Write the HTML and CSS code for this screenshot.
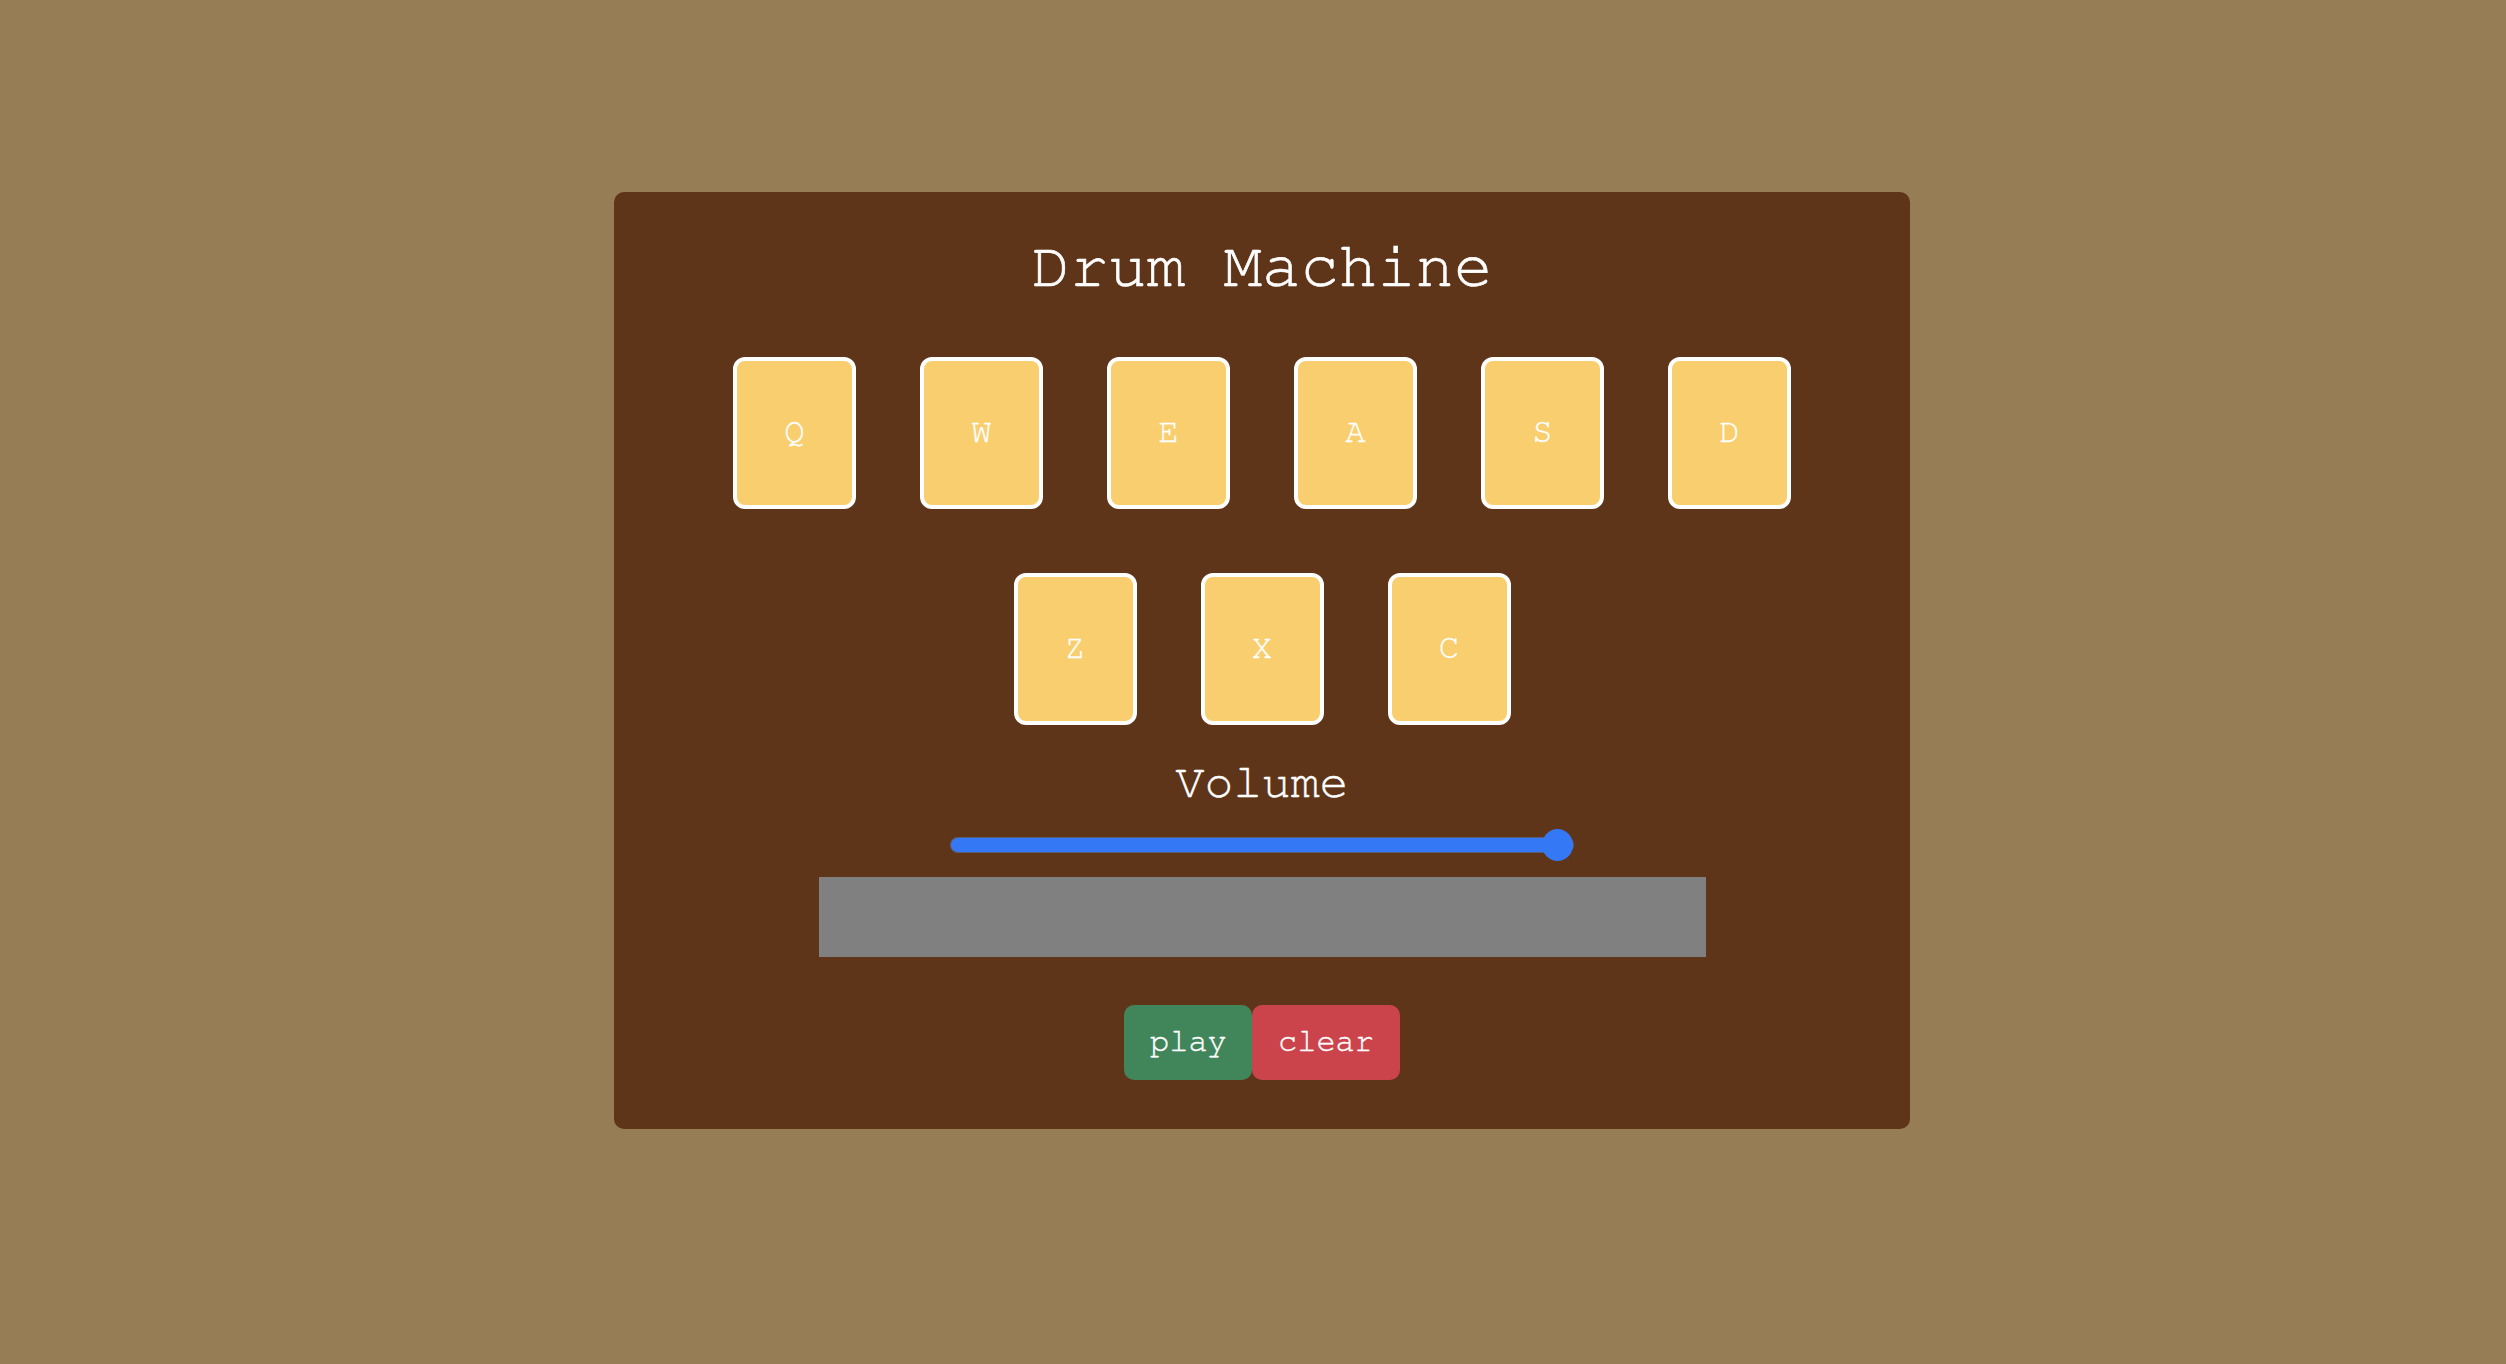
FILE: index.html
```html
<!DOCTYPE html>
<html lang="en">
<head>
<meta charset="utf-8">
<title>Drum Machine</title>
<link rel="stylesheet" href="styles.css">
</head>
<body>
<div class="stage">
  <main class="machine">
    <h1 class="title">Drum Machine</h1>
    <div class="pads">
      <div class="pad">Q</div>
      <div class="pad">W</div>
      <div class="pad">E</div>
      <div class="pad">A</div>
      <div class="pad">S</div>
      <div class="pad">D</div>
      <div class="pad">Z</div>
      <div class="pad">X</div>
      <div class="pad">C</div>
    </div>
    <div class="volume-label">Volume</div>
    <input class="volume" type="range" min="0" max="1" step="0.01" value="1">
    <div class="display"></div>
    <div class="controls">
      <button class="btn btn-play">play</button>
      <button class="btn btn-clear">clear</button>
    </div>
  </main>
</div>
</body>
</html>
```
FILE: styles.css
```css
html, body {
  margin: 0;
  padding: 0;
}
body {
  background: #967d55;
  font-family: "Nimbus Mono PS", "Nimbus Mono L", "FreeMono", Courier, "Courier New", "Liberation Mono", monospace;
  color: #ffffff;
  min-height: 100vh;
}
.stage {
  display: flex;
  justify-content: center;
  padding: 192px 0 0 18px;
}
.machine {
  width: 1296px;
  box-sizing: border-box;
  background: #5e3519;
  border-radius: 10px;
  padding: 39px 0 49px;
  display: flex;
  flex-direction: column;
  align-items: center;
}
.title {
  margin: 0 0 22px;
  font-size: 64px;
  font-weight: normal;
  line-height: 72px;
  color: #ffffff;
  -webkit-text-stroke: 0.6px #ffffff;
}
.pads {
  display: flex;
  flex-wrap: wrap;
  justify-content: center;
  width: 100%;
}
.pad {
  box-sizing: border-box;
  width: 123px;
  height: 152px;
  margin: 32px 32px;
  padding-bottom: 3px;
  background: #f8ce6e;
  border: 4px solid #ffffff;
  border-radius: 12px;
  display: flex;
  align-items: center;
  justify-content: center;
  font-size: 34px;
  color: #ffffff;
  -webkit-text-stroke: 0.3px #ffffff;
}
.volume-label {
  font-size: 48px;
  line-height: 54px;
  margin-top: -1px;
  -webkit-text-stroke: 0.4px #ffffff;
}
.volume {
  -webkit-appearance: none;
  appearance: none;
  width: 622px;
  height: 32px;
  margin: 19px 0 0;
  padding: 0;
  background: transparent;
}
.volume::-webkit-slider-runnable-track {
  height: 14px;
  border-radius: 7px;
  background: #3478f6;
  box-shadow: 0 0 0 1px rgba(90, 122, 170, 0.6);
}
.volume::-webkit-slider-thumb {
  -webkit-appearance: none;
  appearance: none;
  width: 31px;
  height: 32px;
  border-radius: 50%;
  background: #3478f6;
  border: none;
  margin-top: -9px;
}
.display {
  width: 887px;
  height: 80px;
  background: #808080;
  margin-top: 16px;
}
.controls {
  display: flex;
  margin-top: 48px;
}
.btn {
  font-family: "Nimbus Mono PS", "Nimbus Mono L", "FreeMono", Courier, "Courier New", "Liberation Mono", monospace;
  font-size: 32px;
  line-height: 36px;
  color: #ffffff;
  -webkit-text-stroke: 0.4px #ffffff;
  border: none;
  border-radius: 10px;
  padding: 17.5px 25.6px 21.5px;
  margin: 0;
  cursor: pointer;
}
.btn-play {
  background: #41855a;
}
.btn-clear {
  background: #cc444b;
}
```
